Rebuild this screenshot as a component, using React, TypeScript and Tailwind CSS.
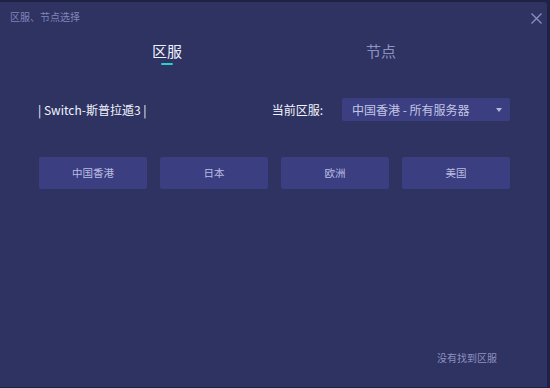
import React from "react";

const regions = ["中国香港", "日本", "欧洲", "美国"];

export default function App() {
  return (
    <div
      className="w-[550px] h-[388px] bg-[#1f2245] flex overflow-hidden"
      style={{ fontFamily: '"Noto Sans CJK SC", "Noto Sans", sans-serif' }}
    >
      <div className="flex-1 mt-[2px] mr-[3px] h-[385px] bg-[#2f3361] rounded-tr-[3px] flex flex-col relative">
        {/* title bar */}
        <div className="flex items-center justify-between pl-[10px] pr-[5px] pt-[8px] h-[22px]">
          <span className="text-[10px] leading-none text-[#8085ba]">区服、节点选择</span>
          <svg width="11" height="11" viewBox="0 0 11 11" className="mt-[2px]">
            <path d="M0.5 0.5L10.5 10.5M10.5 0.5L0.5 10.5" stroke="#8a8fc4" strokeWidth="1.3" />
          </svg>
        </div>

        {/* tabs */}
        <div className="flex mt-[18px] h-[24px]">
          <div className="w-[334px] flex justify-center">
            <div className="flex flex-col items-center">
              <span className="text-[15px] leading-[18px] text-[#eef0ff]">区服</span>
              <span className="w-[12px] h-[2px] mt-[3px] bg-[#27d2c9] rounded-full" />
            </div>
          </div>
          <div className="w-[94px] flex justify-center">
            <span className="text-[15px] leading-[18px] text-[#8d92c4]">节点</span>
          </div>
        </div>

        {/* current region */}
        <div className="flex items-center mt-[32px] pl-[38px] pr-[37px] h-[23px]">
          <span className="text-[12px] text-[#f2f3ff]">| Switch-斯普拉遁3 |</span>
          <span className="ml-auto text-[12px] text-[#f2f3ff]">当前区服:</span>
          <div className="ml-[19px] w-[168px] h-[23px] bg-[#3b3f81] rounded-[2px] flex items-center pl-[10px] pr-[8px]">
            <span className="text-[12px] text-[#c3c6e6]">中国香港 - 所有服务器</span>
            <svg width="6" height="4" viewBox="0 0 6 4" className="ml-auto">
              <path d="M0 0H6L3 4Z" fill="#b5b8dc" />
            </svg>
          </div>
        </div>

        {/* region buttons */}
        <div className="flex gap-[13px] pl-[39px] mt-[36px]">
          {regions.map((r) => (
            <div
              key={r}
              className="w-[108px] h-[32px] bg-[#3b3f81] rounded-[2px] flex items-center justify-center text-[10.5px] text-[#b9bce2]"
            >
              {r}
            </div>
          ))}
        </div>

        <div className="mt-auto mb-[22px] flex justify-end pr-[50px]">
          <span className="text-[10px] text-[#8d91c2]">没有找到区服</span>
        </div>
      </div>
    </div>
  );
}
